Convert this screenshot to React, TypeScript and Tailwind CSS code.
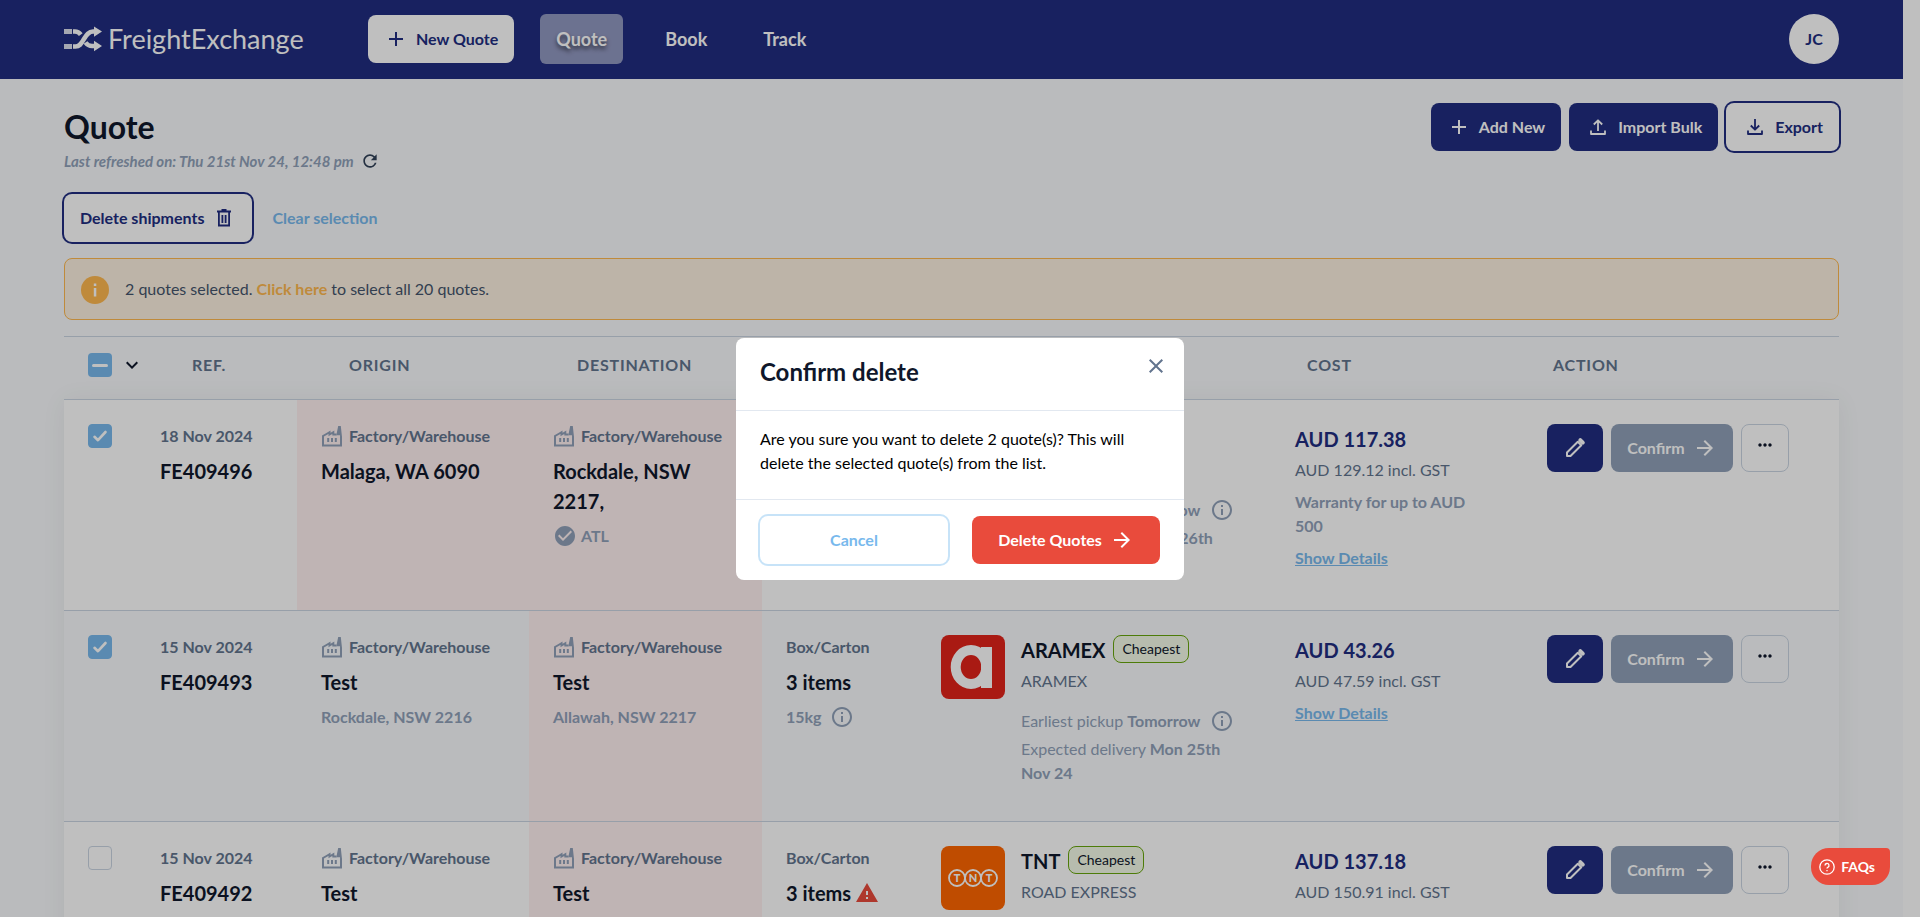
import {
  MdAdd,
  MdArrowForward,
  MdCheckCircle,
  MdClose,
  MdInfoOutline,
  MdKeyboardArrowDown,
  MdMoreHoriz,
  MdRefresh,
  MdWarning,
} from "react-icons/md";

type Place = { name: string; detail?: string; atl?: boolean; flagged?: boolean };

type Quote = {
  ref: string;
  date: string;
  selected: boolean;
  origin: Place;
  destination: Place;
  items: string;
  weight: string;
  warning?: boolean;
  logo: "aramex" | "tnt";
  carrier: string;
  service: string;
  delivery: string;
  cost: string;
  costGst: string;
  warranty?: string;
};

const quotes: Quote[] = [
  {
    ref: "FE409496",
    date: "18 Nov 2024",
    selected: true,
    origin: { name: "Malaga, WA 6090", flagged: true },
    destination: { name: "Rockdale, NSW 2217,", atl: true, flagged: true },
    items: "3 items",
    weight: "15kg",
    logo: "tnt",
    carrier: "TNT",
    service: "ROAD EXPRESS",
    delivery: "Tue 26th Nov 24",
    cost: "AUD 117.38",
    costGst: "AUD 129.12 incl. GST",
    warranty: "Warranty for up to AUD 500",
  },
  {
    ref: "FE409493",
    date: "15 Nov 2024",
    selected: true,
    origin: { name: "Test", detail: "Rockdale, NSW 2216" },
    destination: { name: "Test", detail: "Allawah, NSW 2217", flagged: true },
    items: "3 items",
    weight: "15kg",
    logo: "aramex",
    carrier: "ARAMEX",
    service: "ARAMEX",
    delivery: "Mon 25th Nov 24",
    cost: "AUD 43.26",
    costGst: "AUD 47.59 incl. GST",
  },
  {
    ref: "FE409492",
    date: "15 Nov 2024",
    selected: false,
    origin: { name: "Test", detail: "Rockdale, NSW 2216" },
    destination: { name: "Test", detail: "Allawah, NSW 2217", flagged: true },
    items: "3 items",
    weight: "15kg",
    warning: true,
    logo: "tnt",
    carrier: "TNT",
    service: "ROAD EXPRESS",
    delivery: "Mon 25th Nov 24",
    cost: "AUD 137.18",
    costGst: "AUD 150.91 incl. GST",
  },
];

function LogoMark() {
  return (
    <svg viewBox="0 0 38 26" className="h-[26px] w-[38px]" fill="currentColor" aria-hidden="true">
      <path d="M0 3h8v5H0zM0 18h8v5H0z" opacity=".85" />
      <path
        d="M9 20.500h2.500c4.500 0 6-3.500 8.500-7.500s4.500-7.500 9-7.500h2M9 5.500h2c2.500 0 4.300 1.200 5.800 3.200M21.500 16.500c2 2.800 4 3.500 6.500 3.500h3"
        fill="none"
        stroke="currentColor"
        strokeWidth="4.600"
      />
      <path d="M30 0.500 38 5.500 30 10.800zM30 14.800 38 20 30 25.200z" />
    </svg>
  );
}

function FactoryIcon() {
  return (
    <svg viewBox="0 0 22 22" className="h-[22px] w-[22px] shrink-0 text-slate-400" fill="none" stroke="currentColor" aria-hidden="true">
      <path d="M15.500 9.500h-3.200V7.200L8.500 9.500V7.200L5.500 9 2 11v9.500h18v-9" strokeWidth="2" />
      <path d="M15.300 10.300 17.200 1h2.600L21 12v8h-1.800l-.2-9.700z" fill="currentColor" stroke="none" />
      <path d="M7.200 13v4M11 13v4M14.800 13v4" strokeWidth="2" />
    </svg>
  );
}

function PencilIcon() {
  return (
    <svg viewBox="0 0 24 24" className="h-6 w-6" fill="none" stroke="currentColor" strokeWidth="2" strokeLinejoin="round" aria-hidden="true">
      <path d="M4 20v-3.500L14.800 5.700l3.500 3.500L7.500 20z" />
      <path d="M17.300 4.200 19.800 6.700" strokeWidth="4" strokeLinecap="round" />
    </svg>
  );
}

function TrayIcon({ up }: { up?: boolean }) {
  return (
    <svg viewBox="0 0 18 18" className="h-[18px] w-[18px]" fill="none" stroke="currentColor" strokeWidth="1.800" strokeLinejoin="round" aria-hidden="true">
      <path d="M2 12.500V16h14v-3.500" />
      {up ? <path d="M9 13V2.500M4.800 6.500 9 2.300l4.200 4.200" /> : <path d="M9 1v10.500M4.800 7.500 9 11.700l4.200-4.200" />}
    </svg>
  );
}

function TrashIcon() {
  return (
    <svg viewBox="0 0 16 20" className="h-5 w-4" fill="none" stroke="currentColor" strokeWidth="1.800" aria-hidden="true">
      <path d="M1 3.500h14M5.500 2h5M2.900 4v13.500h10.200V4M6.400 7v8M9.600 7v8" />
    </svg>
  );
}

function CarrierLogo({ kind }: { kind: Quote["logo"] }) {
  if (kind === "aramex") {
    return (
      <svg viewBox="0 0 64 64" className="h-16 w-16 shrink-0 rounded-lg bg-[#e2231a]" role="img" aria-label="Aramex">
        <ellipse cx="30" cy="32" rx="15.300" ry="17" fill="none" stroke="#fff" strokeWidth="10" />
        <path d="M40 12h11v41H40z" fill="#fff" />
      </svg>
    );
  }
  return (
    <svg viewBox="0 0 64 64" className="h-16 w-16 shrink-0 rounded-lg bg-[#ff6600]" role="img" aria-label="TNT">
      <g fill="none" stroke="#fff" strokeWidth="1.800">
        <circle cx="16" cy="32" r="8" />
        <circle cx="32" cy="32" r="8" />
        <circle cx="48" cy="32" r="8" />
      </g>
      <g fill="#fff" fontFamily="Lato, sans-serif" fontWeight="900" fontSize="11" textAnchor="middle">
        <text x="16" y="36">T</text>
        <text x="32" y="36">N</text>
        <text x="48" y="36">T</text>
      </g>
    </svg>
  );
}

function CheckBox({ checked, label }: { checked: boolean; label: string }) {
  return (
    <label className="relative block h-6 w-6">
      <input
        type="checkbox"
        defaultChecked={checked}
        aria-label={label}
        className="peer block h-6 w-6 appearance-none rounded border border-slate-300 checked:border-[#78b9ed] checked:bg-[#78b9ed]"
      />
      <svg
        viewBox="0 0 24 24"
        className="pointer-events-none absolute inset-0 hidden h-6 w-6 peer-checked:block"
        fill="none"
        stroke="#fff"
        strokeWidth="2.600"
        strokeLinecap="round"
        strokeLinejoin="round"
        aria-hidden="true"
      >
        <path d="M6.500 12.800 10 16.200 17.500 8" />
      </svg>
    </label>
  );
}

function PlaceCell({ place }: { place: Place }) {
  return (
    <td className={place.flagged ? "bg-[#fff0f1] px-6 py-6" : "px-6 py-6"}>
      <p className="flex items-center gap-1.5 whitespace-nowrap font-bold leading-6 text-slate-500">
        <FactoryIcon />
        Factory/Warehouse
      </p>
      <p className="mt-2 text-xl font-bold leading-[30px] text-slate-900">{place.name}</p>
      {place.detail && <p className="mt-2 font-bold leading-6 text-slate-400">{place.detail}</p>}
      {place.atl && (
        <p className="mt-2 flex items-center gap-1 font-bold leading-6 text-slate-400">
          <MdCheckCircle className="h-6 w-6" />
          ATL
        </p>
      )}
    </td>
  );
}

function QuoteRow({ quote }: { quote: Quote }) {
  return (
    <tr className="h-[211px] border-t border-slate-300 align-top odd:bg-white even:bg-slate-50">
      <td className="py-6 pl-6">
        <CheckBox checked={quote.selected} label={`Select ${quote.ref}`} />
      </td>
      <td className="py-6 pl-6">
        <p className="font-bold leading-6 text-slate-500">{quote.date}</p>
        <p className="mt-2 text-xl font-bold leading-[30px] text-slate-900">{quote.ref}</p>
      </td>
      <PlaceCell place={quote.origin} />
      <PlaceCell place={quote.destination} />
      <td className="py-6 pl-6">
        <p className="font-bold leading-6 text-slate-500">Box/Carton</p>
        <p className="mt-2 flex items-center gap-1 text-xl font-bold leading-[30px] text-slate-900">
          {quote.items}
          {quote.warning && <MdWarning className="h-6 w-6 text-[#e94b3c]" />}
        </p>
        <p className="mt-2 flex items-center gap-2 font-bold leading-6 text-slate-400">
          {quote.weight}
          <MdInfoOutline className="h-6 w-6" />
        </p>
      </td>
      <td className="py-6 pr-8 pl-6">
        <div className="flex gap-4">
          <CarrierLogo kind={quote.logo} />
          <div className="leading-6">
            <div className="flex h-[30px] items-start gap-2">
              <p className="text-xl font-bold leading-[30px] text-slate-900">{quote.carrier}</p>
              <span className="rounded-lg border border-[#67a60c] bg-[#f4fbe8] px-2 text-sm leading-[26px] text-slate-900">Cheapest</span>
            </div>
            <p className="mt-1 text-slate-500">{quote.service}</p>
            <p className="mt-4 flex items-center gap-2.5 whitespace-nowrap text-slate-400">
              <span>
                Earliest pickup <strong>Tomorrow</strong>
              </span>
              <MdInfoOutline className="h-6 w-6" />
            </p>
            <p className="mt-1 text-slate-400">
              Expected delivery <strong>{quote.delivery}</strong>
            </p>
          </div>
        </div>
      </td>
      <td className="py-6 pr-12 pl-6 leading-6">
        <p className="text-xl font-bold leading-[30px] text-[#202d80]">{quote.cost}</p>
        <p className="mt-1 text-slate-500">{quote.costGst}</p>
        {quote.warranty && <p className="mt-2 font-bold text-slate-400">{quote.warranty}</p>}
        <a href="#details" className="mt-2 block font-bold text-[#78b9ed] underline">
          Show Details
        </a>
      </td>
      <td className="px-6 py-6">
        <div className="flex gap-2">
          <button type="button" aria-label="Edit" className="flex h-12 w-14 items-center justify-center rounded-lg bg-[#202d80] text-white">
            <PencilIcon />
          </button>
          <button type="button" className="flex h-12 w-[122px] items-center justify-center gap-2 rounded-lg bg-slate-400 font-bold text-white">
            Confirm
            <MdArrowForward className="h-6 w-6" />
          </button>
          <button type="button" aria-label="More" className="flex h-12 w-12 items-start justify-center rounded-lg border border-slate-300 pt-2.5 text-slate-900">
            <MdMoreHoriz className="h-5 w-5" />
          </button>
        </div>
      </td>
    </tr>
  );
}

function Header() {
  return (
    <header className="flex h-[79px] items-center bg-[#202d80] px-16 pb-0.5 text-white">
      <a href="#home" className="flex w-[304px] items-center gap-1.5">
        <LogoMark />
        <span className="text-[27px] leading-8">FreightExchange</span>
      </a>
      <nav className="flex items-center gap-6 text-lg font-bold">
        <button type="button" className="mr-0.5 flex h-12 items-center gap-2 rounded-lg bg-white px-4 text-base text-[#202d80]">
          <MdAdd className="h-6 w-6" />
          New Quote
        </button>
        <a href="#quote" className="mr-0.5 flex h-[50px] items-center rounded-md bg-[#9198c0] px-4 [text-shadow:0_3px_4px_rgba(0,0,0,0.6)]">
          Quote
        </a>
        <a href="#book" className="px-4">Book</a>
        <a href="#track" className="px-4">Track</a>
      </nav>
      <button type="button" className="ml-auto h-[50px] w-[50px] rounded-full bg-white font-bold text-[#202d80]">JC</button>
    </header>
  );
}

function ConfirmDelete() {
  return (
    <div className="fixed inset-0 flex items-center justify-center bg-black/25">
      <div role="dialog" aria-modal="true" aria-labelledby="confirm-title" className="w-md rounded-lg bg-white">
        <div className="flex items-start justify-between border-b border-slate-200 px-6 pt-4 pb-5">
          <h2 id="confirm-title" className="text-2xl font-bold leading-9 text-slate-900">
            Confirm delete
          </h2>
          <button type="button" aria-label="Close" className="-mr-2 text-slate-500">
            <MdClose className="h-6 w-6" />
          </button>
        </div>
        <p className="px-6 pt-4 pb-6 leading-6 text-black">
          Are you sure you want to delete 2 quote(s)? This will delete the selected quote(s) from the list.
        </p>
        <div className="grid grid-cols-2 gap-6 border-t border-slate-200 px-6 py-4 font-bold">
          <button type="button" className="h-12 rounded-lg text-[#78b9ed] ring-2 ring-[#c7e3f8]">Cancel</button>
          <button type="button" className="flex h-12 items-center justify-center gap-2 rounded-lg bg-[#e94b3c] text-white">
            Delete Quotes
            <MdArrowForward className="h-6 w-6" />
          </button>
        </div>
      </div>
    </div>
  );
}

export default function App() {
  return (
    <div className="h-screen overflow-hidden bg-white pr-[17px] font-[Lato,sans-serif] text-base">
      <Header />
      <main className="bg-slate-50 px-16 pt-6">
        <div className="flex items-start justify-between">
          <div>
            <h1 className="text-[32px] font-bold leading-[48px] text-slate-900">Quote</h1>
            <p className="flex items-center gap-1.5 text-[15px] font-bold italic leading-5 text-slate-400">
              Last refreshed on: Thu 21st Nov 24, 12:48 pm
              <button type="button" aria-label="Refresh" className="text-slate-700">
                <MdRefresh className="h-5 w-5" />
              </button>
            </p>
          </div>
          <div className="flex gap-2 font-bold">
            <button type="button" className="flex h-12 items-center gap-2 rounded-lg bg-[#202d80] px-4 text-white">
              <MdAdd className="h-6 w-6" />
              Add New
            </button>
            <button type="button" className="flex h-12 items-center gap-[11px] rounded-lg bg-[#202d80] pr-4 pl-5 text-white">
              <TrayIcon up />
              Import Bulk
            </button>
            <button type="button" className="flex h-12 items-center gap-[11px] rounded-lg bg-white pr-4 pl-5 text-[#202d80] ring-2 ring-[#202d80]">
              <TrayIcon />
              Export
            </button>
          </div>
        </div>

        <div className="mt-[23px] flex items-center gap-5 font-bold">
          <button type="button" className="flex h-12 items-center gap-3 rounded-lg bg-white px-4 pr-5 text-[#202d80] ring-2 ring-[#202d80]">
            Delete shipments
            <TrashIcon />
          </button>
          <button type="button" className="text-[#78b9ed]">Clear selection</button>
        </div>

        <div className="mt-4 flex h-[62px] items-center gap-4 rounded-lg border border-[#ffb84f] bg-[#fdf1e0] px-4 text-slate-600">
          <span className="mt-0.5 flex h-7 w-7 items-center justify-center rounded-full bg-[#ffb84f] text-white">
            <svg viewBox="0 0 28 28" className="h-7 w-7" fill="currentColor" aria-hidden="true">
              <path d="M12.800 7.500h2.500v2.500h-2.500zM12.800 12h2.500v8.500h-2.500z" />
            </svg>
          </span>
          <p>
            2 quotes selected. <a href="#all" className="font-bold text-[#ffb84f]">Click here</a> to select all 20 quotes.
          </p>
        </div>

        <table className="mt-4 w-full table-fixed border-collapse text-left">
          <colgroup>
            <col className="w-[72px]" />
            <col className="w-[161px]" />
            <col className="w-[232px]" />
            <col className="w-[233px]" />
            <col className="w-[155px]" />
            <col />
            <col className="w-[252px]" />
            <col className="w-[316px]" />
          </colgroup>
          <thead>
            <tr className="h-[63px] border-t border-slate-300 tracking-wider text-slate-500 [&>th]:pb-1.5">
              <th className="pl-6">
                <span className="flex items-center gap-2">
                  <span className="relative block h-6 w-6 shrink-0">
                    <input type="checkbox" aria-label="Select all" className="block h-6 w-6 appearance-none rounded bg-[#78b9ed]" />
                    <span className="pointer-events-none absolute inset-x-1 top-[11px] h-[3px] rounded bg-white" />
                  </span>
                  <MdKeyboardArrowDown className="h-6 w-6 shrink-0 text-slate-900" />
                </span>
              </th>
              <th className="pl-14 font-bold">REF.</th>
              <th className="pl-[52px] font-bold">ORIGIN</th>
              <th className="pl-12 font-bold">DESTINATION</th>
              <th className="pl-8 font-bold">ITEMS</th>
              <th className="pl-8 font-bold">CARRIER</th>
              <th className="pl-9 font-bold">COST</th>
              <th className="pl-[30px] font-bold">ACTION</th>
            </tr>
          </thead>
          <tbody className="shadow-[0_0_24px_rgba(0,0,0,0.06)]">
            {quotes.map((quote) => (
              <QuoteRow key={quote.ref} quote={quote} />
            ))}
          </tbody>
        </table>
      </main>

      <ConfirmDelete />

      <button
        type="button"
        className="fixed right-[30px] bottom-8 flex h-[37px] items-center gap-1.5 rounded-[18px] rounded-tr bg-[#e94b3c] pr-[15px] pl-2 text-sm font-bold text-white"
      >
        <svg viewBox="0 0 16 16" className="h-4 w-4" fill="none" stroke="currentColor" strokeWidth="1.300" aria-hidden="true">
          <circle cx="8" cy="8" r="7.200" />
          <path d="M6 6.500a2 2 0 1 1 2.800 1.800c-.6.300-.8.600-.8 1.300" />
          <path d="M8 11v1.300" />
        </svg>
        FAQs
      </button>
    </div>
  );
}
